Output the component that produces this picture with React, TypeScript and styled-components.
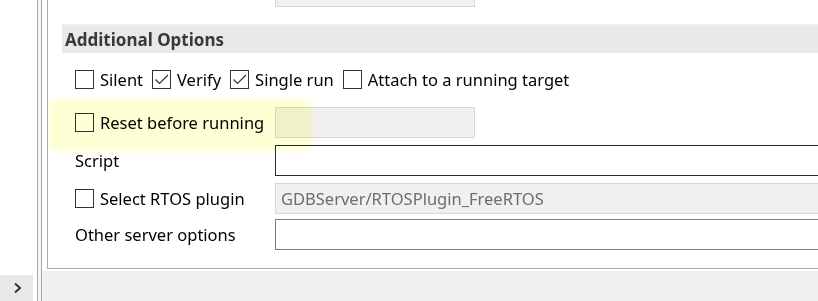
import styled, { createGlobalStyle } from "styled-components";

const GlobalStyle = createGlobalStyle`
  html, body {
    margin: 0;
    padding: 0;
    overflow: hidden;
    background: #ffffff;
  }
  body {
    font-family: "Noto Sans", "Liberation Sans", sans-serif;
    color: #000000;
  }
`;

const Frame = styled.div`
  display: flex;
  width: 818px;
  height: 301px;
  overflow: hidden;
`;

const LeftPane = styled.div`
  width: 37px;
  display: flex;
  flex-direction: column;
  justify-content: flex-end;
  background: #ffffff;
`;

const ExpandButton = styled.div`
  width: 33px;
  height: 26px;
  background: #e8e8e8;
  display: flex;
  align-items: center;
  justify-content: center;
`;

const Sash = styled.div`
  width: 3px;
  border-left: 1px solid #a9a9a9;
  border-right: 1px solid #a9a9a9;
  background: #f6f6f6;
`;

const RightPane = styled.div`
  flex: 1;
  display: flex;
  flex-direction: column;
  background: #ffffff;
  min-width: 0;
`;

const ScrollArea = styled.div`
  flex: 1;
  padding-left: 5px;
  overflow: hidden;
`;

const Footer = styled.div`
  height: 30px;
  background: #f0f0f0;
`;

/* group box; its top and right edges lie outside the window */
const Group = styled.div`
  margin-top: -24px;
  width: 820px;
  height: 293px;
  box-sizing: border-box;
  border-left: 1px solid #adadad;
  border-bottom: 1px solid #adadad;
  padding-left: 14px;
`;

const Row = styled.div<{ $gap?: number }>`
  display: grid;
  grid-template-columns: 200px 1fr;
  align-items: center;
  padding-left: 13px;
  height: 31px;
  margin-top: ${(p) => p.$gap ?? 0}px;
`;

const SectionHeader = styled.div`
  margin-top: 17px;
  height: 29px;
  box-sizing: border-box;
  background: #e9e9e9;
  border-top: 1px solid #f0f0f0;
  padding-left: 3px;
  display: flex;
  align-items: center;
  font-weight: 700;
  font-size: 17px;
  color: #3a3a3a;
`;

const CheckRow = styled.div`
  display: flex;
  align-items: center;
  padding-left: 13px;
  height: 26px;
  margin-top: 13px;
`;

const CheckItem = styled.label`
  display: flex;
  align-items: center;
  margin-right: 9px;
  font-size: 16.5px;
  white-space: nowrap;
`;

const LabelText = styled.span`
  font-size: 16.5px;
  white-space: nowrap;
`;

const Box = styled.span`
  width: 19px;
  height: 19px;
  box-sizing: border-box;
  border: 1px solid #333333;
  background: #ffffff;
  margin-right: 6px;
  display: inline-flex;
  flex-shrink: 0;
`;

const Field = styled.div<{ $state?: "disabled" | "focus" | "normal"; $wide?: boolean }>`
  height: 31px;
  box-sizing: border-box;
  width: ${(p) => (p.$wide ? "560px" : "200px")};
  border: 1px solid
    ${(p) =>
      p.$state === "disabled" ? "#d6d6d6" : p.$state === "focus" ? "#2b2b2b" : "#7a7a7a"};
  background: ${(p) => (p.$state === "disabled" ? "#f0f0f0" : "#ffffff")};
  color: #6d6d6d;
  font-size: 16.5px;
  padding-left: 5px;
  display: flex;
  align-items: center;
  white-space: nowrap;
`;

const Highlight = styled.div`
  position: absolute;
  left: 49px;
  top: 99px;
  width: 263px;
  height: 52px;
  border-radius: 6px;
  background: rgba(255, 255, 120, 0.3);
  filter: blur(2px);
  mix-blend-mode: multiply;
  pointer-events: none;
`;

const Stage = styled.div`
  position: relative;
`;

const Check = ({ checked }: { checked?: boolean }) => (
  <Box>
    {checked && (
      <svg width="17" height="17" viewBox="0 0 17 17">
        <path d="M2.5 8.5 L6.5 12.5 L15 4" fill="none" stroke="#333" strokeWidth="1.2" />
      </svg>
    )}
  </Box>
);

export default function App() {
  return (
    <Stage>
      <GlobalStyle />
      <Frame>
        <LeftPane>
          <ExpandButton>
            <svg width="10" height="12" viewBox="0 0 10 12">
              <path d="M3 1.5 L8 6 L3 10.5" fill="none" stroke="#333" strokeWidth="2" />
            </svg>
          </ExpandButton>
        </LeftPane>
        <Sash />
        <RightPane>
          <ScrollArea>
            <Group>
              <Row>
                <span />
                <Field $state="disabled" />
              </Row>
              <SectionHeader>Additional Options</SectionHeader>
              <CheckRow>
                <CheckItem>
                  <Check />
                  Silent
                </CheckItem>
                <CheckItem>
                  <Check checked />
                  Verify
                </CheckItem>
                <CheckItem>
                  <Check checked />
                  Single run
                </CheckItem>
                <CheckItem>
                  <Check />
                  Attach to a running target
                </CheckItem>
              </CheckRow>
              <Row $gap={15}>
                <CheckItem>
                  <Check />
                  Reset before running
                </CheckItem>
                <Field $state="disabled" />
              </Row>
              <Row $gap={7}>
                <LabelText>Script</LabelText>
                <Field $state="focus" $wide />
              </Row>
              <Row $gap={7}>
                <CheckItem>
                  <Check />
                  Select RTOS plugin
                </CheckItem>
                <Field $state="disabled" $wide>
                  GDBServer/RTOSPlugin_FreeRTOS
                </Field>
              </Row>
              <Row $gap={5}>
                <LabelText>Other server options</LabelText>
                <Field $wide />
              </Row>
            </Group>
          </ScrollArea>
          <Footer />
        </RightPane>
      </Frame>
      <Highlight />
    </Stage>
  );
}
